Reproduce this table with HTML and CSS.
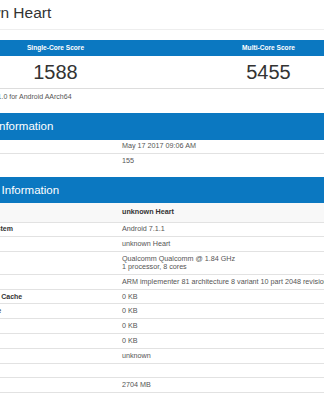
FILE: index.html
```html
<!DOCTYPE html>
<html lang="en">
<head>
<meta charset="utf-8">
<title>unknown Heart - Geekbench Browser</title>
<link rel="stylesheet" href="styles.css">
</head>
<body>
<div class="page">
  <h1 class="title">unknown Heart</h1>

  <div class="scores">
    <div class="score-head">Single-Core Score</div>
    <div class="score-head">Multi-Core Score</div>
    <div class="score-val">1588</div>
    <div class="score-val">5455</div>
  </div>
  <p class="version">Geekbench 4.1.0 for Android AArch64</p>

  <section class="info">
    <h2 class="bar">Result Information</h2>
    <div class="row"><span class="k">Upload Date</span><span class="v">May 17 2017 09:06 AM</span></div>
    <div class="row last"><span class="k">Views</span><span class="v">155</span></div>
  </section>

  <section class="info">
    <h2 class="bar">System Information</h2>
    <div class="row head"><span class="k"></span><span class="v">unknown Heart</span></div>
    <div class="row"><span class="k">Operating System</span><span class="v">Android 7.1.1</span></div>
    <div class="row"><span class="k">Model</span><span class="v">unknown Heart</span></div>
    <div class="row"><span class="k">Processor</span><span class="v">Qualcomm Qualcomm @ 1.84 GHz<br>1 processor, 8 cores</span></div>
    <div class="row"><span class="k">Processor ID</span><span class="v nowrap">ARM implementer 81 architecture 8 variant 10 part 2048 revision 1</span></div>
    <div class="row"><span class="k">L1 Instruction Cache</span><span class="v">0 KB</span></div>
    <div class="row"><span class="k">L1 Data Cache</span><span class="v">0 KB</span></div>
    <div class="row"><span class="k">L2 Cache</span><span class="v">0 KB</span></div>
    <div class="row"><span class="k">L3 Cache</span><span class="v">0 KB</span></div>
    <div class="row"><span class="k">Motherboard</span><span class="v">unknown</span></div>
    <div class="row"><span class="k">BIOS</span><span class="v"></span></div>
    <div class="row"><span class="k">Memory</span><span class="v">2704 MB</span></div>
  </section>
</div>
</body>
</html>
```

FILE: styles.css
```css
body {
  margin: 0;
  overflow: hidden;
  background: #fff;
  color: #333;
  font-family: "Liberation Sans", Arial, sans-serif;
}

.page {
  margin-left: -58px;
  width: 440px;
}

/* device name heading */
.title {
  margin: 0 0 10px;
  padding: 3px 0 6px 5px;
  font-size: 15.5px;
  font-weight: normal;
  line-height: 20px;
  border-bottom: 1px solid #eee;
}

/* score table */
.scores {
  display: grid;
  grid-template-columns: 213px 213px;
  margin-left: 7px;
  border-bottom: 1px solid #ddd;
}

.score-head {
  height: 16px;
  background: #0b78c1;
  color: #fff;
  font-size: 6.6px;
  font-weight: bold;
  line-height: 16px;
  text-align: center;
}

.score-val {
  height: 32px;
  font-size: 20px;
  line-height: 32px;
  text-align: center;
  color: #333;
}

.version {
  margin: 0 0 8px;
  padding-left: 12px;
  font-size: 7px;
  line-height: 16px;
  color: #555;
}

/* information tables */
.info {
  margin-bottom: 8.5px;
}

.bar {
  margin: 0;
  height: 26.5px;
  padding-left: 18px;
  background: #0b78c1;
  color: #fff;
  font-size: 11.5px;
  font-weight: normal;
  line-height: 26.5px;
}

.row {
  display: grid;
  grid-template-columns: 176px 1fr;
  font-size: 7.2px;
  line-height: 8px;
  border-bottom: 1px solid #e2e2e2;
}

.row .k,
.row .v {
  padding: 2.9px 0;
}

.row .k {
  padding-left: 11px;
  font-size: 7px;
  font-weight: bold;
  color: #333;
}

.row .v {
  padding-left: 4px;
  color: #555;
}

.row.last {
  border-bottom: none;
}

.row.head {
  background: #f8f8f8;
}

.row.head .k,
.row.head .v {
  padding-top: 5px;
  padding-bottom: 5.5px;
}

.row.head .v {
  font-weight: bold;
  color: #333;
}

.nowrap {
  white-space: nowrap;
}
```
